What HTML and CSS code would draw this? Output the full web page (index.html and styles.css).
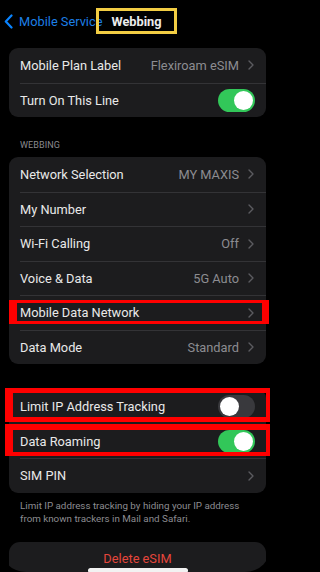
FILE: index.html
```html
<!DOCTYPE html>
<html lang="en">
<head>
<meta charset="utf-8">
<title>Webbing</title>
<link rel="stylesheet" href="styles.css">
</head>
<body>
<div class="screen">
  <header class="nav">
    <div class="back">
      <svg class="back-chev" width="9" height="15" viewBox="0 0 9 15"><path d="M7.5 1.5L1.8 7.5l5.7 6" fill="none" stroke="#0a84ff" stroke-width="2.2" stroke-linecap="round" stroke-linejoin="round"/></svg>
      <span class="back-label">Mobile Service</span>
    </div>
    <div class="title-box"><h1 class="title">Webbing</h1></div>
    <div></div>
  </header>

  <section class="group g1">
    <div class="row"><div class="row-inner"><span class="label">Mobile Plan Label</span><span class="value">Flexiroam eSIM</span><svg class="chev" width="6" height="10" viewBox="0 0 6 10"><path d="M1 1l4 4-4 4" fill="none" stroke="#5b5b60" stroke-width="1.4" stroke-linecap="round" stroke-linejoin="round"/></svg></div></div>
    <div class="row"><div class="row-inner"><span class="label">Turn On This Line</span><span class="toggle on"><span class="knob"></span></span></div></div>
  </section>

  <div class="section-label">WEBBING</div>

  <section class="group g2">
    <div class="row"><div class="row-inner"><span class="label">Network Selection</span><span class="value">MY MAXIS</span><svg class="chev" width="6" height="10" viewBox="0 0 6 10"><path d="M1 1l4 4-4 4" fill="none" stroke="#5b5b60" stroke-width="1.4" stroke-linecap="round" stroke-linejoin="round"/></svg></div></div>
    <div class="row"><div class="row-inner"><span class="label">My Number</span><span class="value"></span><svg class="chev" width="6" height="10" viewBox="0 0 6 10"><path d="M1 1l4 4-4 4" fill="none" stroke="#5b5b60" stroke-width="1.4" stroke-linecap="round" stroke-linejoin="round"/></svg></div></div>
    <div class="row"><div class="row-inner"><span class="label">Wi-Fi Calling</span><span class="value">Off</span><svg class="chev" width="6" height="10" viewBox="0 0 6 10"><path d="M1 1l4 4-4 4" fill="none" stroke="#5b5b60" stroke-width="1.4" stroke-linecap="round" stroke-linejoin="round"/></svg></div></div>
    <div class="row"><div class="row-inner"><span class="label">Voice &amp; Data</span><span class="value">5G Auto</span><svg class="chev" width="6" height="10" viewBox="0 0 6 10"><path d="M1 1l4 4-4 4" fill="none" stroke="#5b5b60" stroke-width="1.4" stroke-linecap="round" stroke-linejoin="round"/></svg></div></div>
    <div class="row"><div class="row-inner"><span class="label">Mobile Data Network</span><span class="value"></span><svg class="chev" width="6" height="10" viewBox="0 0 6 10"><path d="M1 1l4 4-4 4" fill="none" stroke="#5b5b60" stroke-width="1.4" stroke-linecap="round" stroke-linejoin="round"/></svg></div></div>
    <div class="row"><div class="row-inner"><span class="label">Data Mode</span><span class="value">Standard</span><svg class="chev" width="6" height="10" viewBox="0 0 6 10"><path d="M1 1l4 4-4 4" fill="none" stroke="#5b5b60" stroke-width="1.4" stroke-linecap="round" stroke-linejoin="round"/></svg></div></div>
  </section>

  <section class="group g3">
    <div class="row"><div class="row-inner"><span class="label">Limit IP Address Tracking</span><span class="toggle off"><span class="knob"></span></span></div></div>
    <div class="row"><div class="row-inner"><span class="label">Data Roaming</span><span class="toggle on"><span class="knob"></span></span></div></div>
    <div class="row"><div class="row-inner"><span class="label">SIM PIN</span><span class="value"></span><svg class="chev" width="6" height="10" viewBox="0 0 6 10"><path d="M1 1l4 4-4 4" fill="none" stroke="#5b5b60" stroke-width="1.4" stroke-linecap="round" stroke-linejoin="round"/></svg></div></div>
  </section>

  <p class="footnote">Limit IP address tracking by hiding your IP address from known trackers in Mail and Safari.</p>

  <section class="group g4">
    <div class="delete">Delete eSIM</div>
  </section>

  <div class="mark mark-mdn"></div>
  <div class="mark mark-limit"></div>
  <div class="mark mark-roam"></div>
  <div class="home-indicator"></div>
</div>
</body>
</html>
```

FILE: styles.css
```css
* { box-sizing: border-box; }

html, body {
  margin: 0;
  padding: 0;
  background: #000;
}

body {
  font-family: Roboto, "Noto Sans", "Liberation Sans", sans-serif;
  color: #ececec;
  -webkit-font-smoothing: antialiased;
}

.screen {
  position: relative;
  width: 271px;
  height: 572px;
  overflow: hidden;
  background: #000;
  border-bottom-left-radius: 26px;
  border-bottom-right-radius: 26px;
}

.nav {
  height: 42px;
  display: grid;
  grid-template-columns: minmax(0, 1fr) auto minmax(0, 1fr);
  align-items: start;
  padding-top: 8px;
  padding-left: 2px;
}

.back {
  display: flex;
  align-items: center;
  gap: 6px;
  padding-left: 2px;
  height: 26px;
  white-space: nowrap;
  overflow: visible;
}

.back-chev { flex: none; }

.back-label {
  font-size: 12.8px;
  color: #1c7fe6;
}

.title-box {
  width: 81px;
  height: 26px;
  border: 3px solid #f2cd43;
  display: flex;
  align-items: center;
  justify-content: center;
}

.title {
  margin: 0;
  font-size: 12.8px;
  font-weight: 700;
  color: #ececec;
}

.group {
  margin: 0 5px 0 9px;
  background: #1c1c1e;
  border-radius: 9px;
  overflow: hidden;
}

.g1 { margin-top: 6px; }
.g2 { margin-top: 0; }
.g3 { margin-top: 25px; }
.g4 { margin-top: 17px; height: 60px; border-radius: 11px; }

.row {
  height: 34.5px;
  padding-left: 11px;
}

.row-inner {
  height: 100%;
  display: flex;
  align-items: center;
  padding-right: 12px;
}

.row + .row .row-inner {
  border-top: 1px solid #333336;
}

.label {
  flex: 1;
  font-size: 12.8px;
  color: #e9e9e9;
  white-space: nowrap;
}

.value {
  font-size: 12.8px;
  color: #8c8c91;
  margin-right: 9px;
  white-space: nowrap;
}

.chev { flex: none; }

.toggle {
  position: relative;
  flex: none;
  width: 37px;
  height: 23px;
  border-radius: 12px;
  margin-right: -1px;
  background: #39393d;
}

.toggle.on { background: #32c759; }

.knob {
  position: absolute;
  top: 2px;
  left: 2px;
  width: 19px;
  height: 19px;
  border-radius: 50%;
  background: #fff;
}

.toggle.on .knob { left: 16px; }

.section-label {
  height: 40px;
  padding: 23px 0 0 20px;
  font-size: 9px;
  color: #8a8a8e;
  letter-spacing: 0.1px;
}

.footnote {
  margin: 6px 14px 0 20px;
  font-size: 9.8px;
  line-height: 13px;
  color: #8c8c91;
}

.delete {
  height: 34px;
  display: flex;
  align-items: center;
  justify-content: center;
  font-size: 12.8px;
  color: #e5463c;
}

.mark {
  position: absolute;
  border-style: solid;
  border-color: #ff0000;
}

.mark-mdn {
  left: 9px;
  top: 300px;
  width: 260px;
  height: 24px;
  border-width: 3px 7px 3px 8px;
}

.mark-limit {
  left: 5px;
  top: 388px;
  width: 265px;
  height: 34px;
  border-width: 5px 4px 5px 8px;
}

.mark-roam {
  left: 5px;
  top: 424px;
  width: 265px;
  height: 32px;
  border-width: 6px 4px 4px 8px;
}

.home-indicator {
  position: absolute;
  left: 88px;
  top: 568px;
  width: 100px;
  height: 5px;
  border-radius: 3px;
  background: #f2f2f2;
}
```
